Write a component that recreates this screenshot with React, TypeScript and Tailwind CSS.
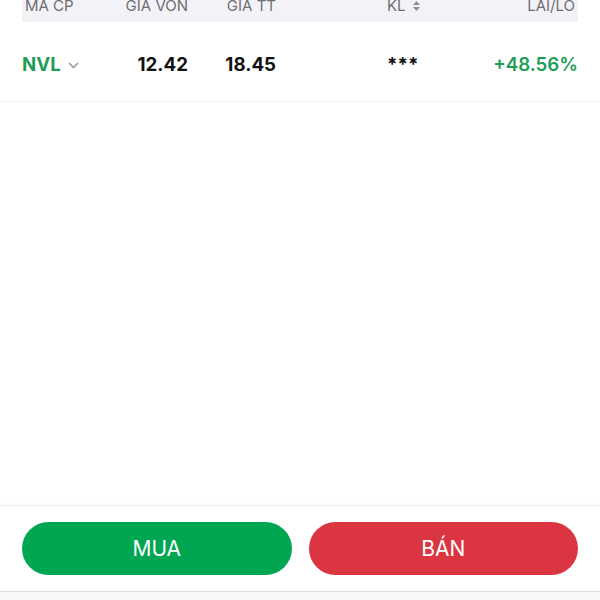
export default function App() {
  return (
    <div className="flex h-[600px] w-[600px] flex-col bg-white font-['Inter','Noto_Sans',sans-serif]">
      <div className="px-[22px]">
        <div className="flex h-[22px] items-start overflow-hidden bg-[#f3f3f7] text-[15px] leading-[15px] text-[#6e6e73]">
          <div className="-mt-[2px] flex w-full">
            <div className="w-[100px] pl-[3px]">MÃ CP</div>
            <div className="w-[66px] text-right">GIÁ VỐN</div>
            <div className="w-[88px] text-right">GIÁ TT</div>
            <div className="ml-[111px] flex items-center gap-[6px]">
              KL
              <svg width="9" height="12" viewBox="0 0 9 12" fill="#8e8e93">
                <path d="M4.5 1 L8 5 H1 Z" />
                <path d="M4.5 11 L8 7 H1 Z" />
              </svg>
            </div>
            <div className="flex-1 pr-[3px] text-right">LÃI/LỖ</div>
          </div>
        </div>
      </div>

      <div className="flex h-[80px] items-center border-b border-[#f0f0f2] px-[22px] pt-[8px] text-[18.7px]">
        <div className="flex w-[100px] items-center gap-[7px]">
          <span className="font-bold text-[#1e9e57]">NVL</span>
          <svg width="11" height="7" viewBox="0 0 11 7" fill="none" stroke="#8e8e93" strokeWidth="1.3">
            <path d="M1 1 L5.5 5.5 L10 1" />
          </svg>
        </div>
        <div className="w-[66px] text-right font-bold text-[#111]">12.42</div>
        <div className="w-[88px] text-right font-bold text-[#111]">18.45</div>
        <div className="ml-[111px] font-bold text-[#111]">***</div>
        <div className="flex-1 text-right font-semibold text-[#1e9e57]">+48.56%</div>
      </div>

      <div className="flex-1" />

      <div className="flex gap-[17px] border-t border-[#ececee] px-[22px] pb-[16px] pt-[16px] shadow-[0_-1px_2px_rgba(0,0,0,0.03)]">
        <button className="flex h-[53px] flex-1 items-center justify-center rounded-full bg-[#00a652] text-[21px] text-white">
          MUA
        </button>
        <button className="flex h-[53px] flex-1 items-center justify-center rounded-full bg-[#da3540] text-[21px] text-white">
          BÁN
        </button>
      </div>
      <div className="h-[9px] border-t border-[#dcdcde] bg-[#f7f7f8]" />
    </div>
  );
}
